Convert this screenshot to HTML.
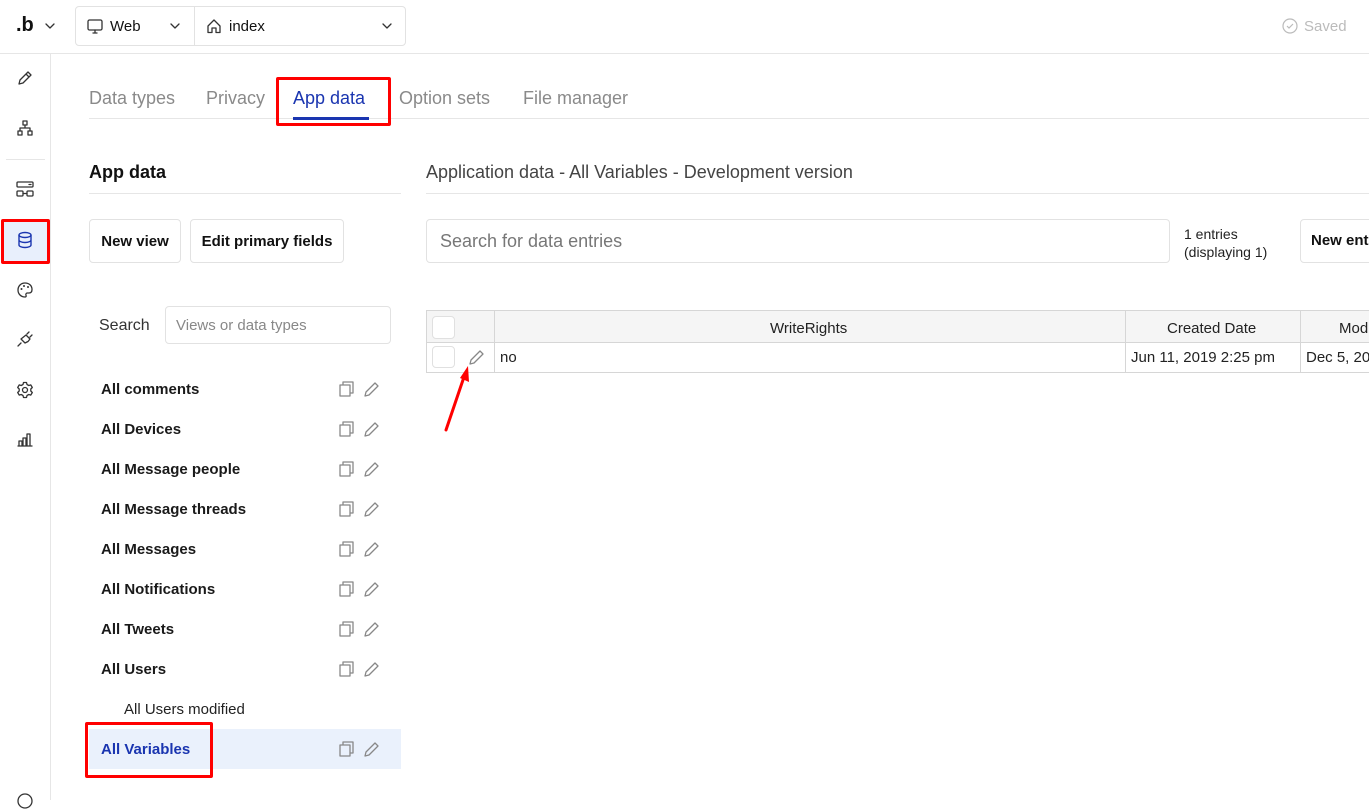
<!DOCTYPE html>
<html><head><meta charset="utf-8"><style>
*{margin:0;padding:0;box-sizing:border-box}
body{width:1369px;height:800px;overflow:hidden;background:#fff;font-family:"Liberation Sans",sans-serif;color:#111;position:relative}
.a{position:absolute}
.t{white-space:nowrap}
svg{display:block}
.ic{fill:none;stroke:#333;stroke-width:1.3;stroke-linecap:round;stroke-linejoin:round}
.gi{fill:none;stroke:#888;stroke-width:1.3;stroke-linejoin:round}
.row{position:absolute;left:89px;width:312px;height:40px}
.row span{position:absolute;left:12px;top:12px;font-size:15px;font-weight:bold;color:#1a1a1a}
.row svg{position:absolute;top:11px}
.btn{position:absolute;border:1px solid #e2e2e2;border-radius:4px;font-size:15px;font-weight:bold;display:flex;align-items:center;justify-content:center}
.red{position:absolute;border:3px solid #f00;border-radius:2px}
</style></head><body>
<div class="a" style="left:0;top:53px;width:1369px;height:1px;background:#e6e6e6"></div>
<div class="a t" style="left:16px;top:14px;font-size:20px;font-weight:bold">.b</div>
<svg class="a" style="left:45px;top:22px" width="10" height="8"><path class="ic" d="M1 2l4 4 4-4"/></svg>
<div class="a" style="left:75px;top:6px;width:331px;height:40px;border:1px solid #e2e2e2;border-radius:4px"></div>
<div class="a" style="left:194px;top:7px;width:1px;height:38px;background:#e2e2e2"></div>
<svg class="a" style="left:87px;top:19px" width="16" height="16"><rect class="ic" x="1" y="1" width="14" height="10" rx="1.5"/><path class="ic" d="M6 14h4M8 11v3"/></svg>
<div class="a t" style="left:110px;top:18px;font-size:15px">Web</div>
<svg class="a" style="left:170px;top:22px" width="10" height="8"><path class="ic" d="M1 2l4 4 4-4"/></svg>
<svg class="a" style="left:206px;top:18px" width="16" height="16"><path class="ic" d="M2 8L8 2l6 6v6.5h-4V10H6v4.5H2z"/></svg>
<div class="a t" style="left:229px;top:18px;font-size:15px">index</div>
<svg class="a" style="left:382px;top:22px" width="10" height="8"><path class="ic" d="M1 2l4 4 4-4"/></svg>
<svg class="a" style="left:1282px;top:18px" width="16" height="16"><circle cx="8" cy="8" r="7" fill="none" stroke="#bbb" stroke-width="1.2"/><path d="M5 8l2 2 4-4" fill="none" stroke="#bbb" stroke-width="1.2"/></svg>
<div class="a t" style="left:1304px;top:18px;font-size:15px;color:#bbb">Saved</div>
<div class="a" style="left:50px;top:54px;width:1px;height:746px;background:#e6e6e6"></div>
<div class="a" style="left:6px;top:159px;width:39px;height:1px;background:#e6e6e6"></div>
<svg class="a" style="left:16px;top:69px" width="18" height="18"><path class="ic" d="M3 15l1-4 8-8 3 3-8 8z M10 5l3 3"/></svg>
<svg class="a" style="left:16px;top:119px" width="18" height="18"><rect class="ic" x="7" y="2" width="4" height="4"/><rect class="ic" x="2" y="12" width="4" height="4"/><rect class="ic" x="12" y="12" width="4" height="4"/><path class="ic" d="M9 6v3M4 12V9h10v3"/></svg>
<svg class="a" style="left:16px;top:180px" width="18" height="18"><rect class="ic" x="1" y="2" width="16" height="5" rx="1"/><rect class="ic" x="1" y="11" width="6" height="5" rx="1"/><rect class="ic" x="11" y="11" width="6" height="5" rx="1"/><path class="ic" d="M7 13.5h4M13 4.5h2"/></svg>
<div class="a" style="left:2px;top:220px;width:47px;height:43px;background:#e8effc"></div>
<div class="red" style="left:1px;top:219px;width:49px;height:45px"></div>
<svg class="a" style="left:16px;top:231px" width="18" height="18"><g fill="none" stroke="#1a35b0" stroke-width="1.4"><ellipse cx="9" cy="4" rx="6" ry="2.5"/><path d="M3 4v10c0 1.4 2.7 2.5 6 2.5s6-1.1 6-2.5V4M3 9c0 1.4 2.7 2.5 6 2.5s6-1.1 6-2.5"/></g></svg>
<svg class="a" style="left:16px;top:281px" width="18" height="18"><path class="ic" d="M9 2C5 2 2 5 2 9s3 7 7 7c1 0 1.5-.8 1-1.7-.6-1 .2-2.3 1.3-2.3H13c2 0 3-1.4 3-3.5C16 4.5 13 2 9 2z"/><circle cx="5.5" cy="8" r="1" fill="#333"/><circle cx="8" cy="5" r="1" fill="#333"/><circle cx="12" cy="6" r="1" fill="#333"/></svg>
<svg class="a" style="left:16px;top:330px" width="18" height="18"><path class="ic" d="M2 16l3-3M5 9l4 4 3-1.5 2-2.5-4-4-2.5 2z M11 4l2-2M14 7l2-2"/></svg>
<svg class="a" style="left:16px;top:381px" width="18" height="18"><circle class="ic" cx="9" cy="9" r="2.5"/><path class="ic" d="M7.5 1.5h3l.5 2 1.8 1 2-.6 1.5 2.6-1.5 1.5v2l1.5 1.5-1.5 2.6-2-.6-1.8 1-.5 2h-3l-.5-2-1.8-1-2 .6-1.5-2.6L3.2 10V8L1.7 6.5l1.5-2.6 2 .6 1.8-1z"/></svg>
<svg class="a" style="left:16px;top:430px" width="18" height="18"><path class="ic" d="M2 16h14M3 16v-5h3v5M7 16V8h3v8M11 16V4h3v12"/></svg>
<svg class="a" style="left:16px;top:792px" width="18" height="18"><circle class="ic" cx="9" cy="9" r="7"/></svg>
<div class="a t" style="left:89px;top:88px;font-size:18px;color:#8a8a8a">Data types</div>
<div class="a t" style="left:206px;top:88px;font-size:18px;color:#8a8a8a">Privacy</div>
<div class="a t" style="left:293px;top:88px;font-size:18px;color:#1a35b0">App data</div>
<div class="a t" style="left:399px;top:88px;font-size:18px;color:#8a8a8a">Option sets</div>
<div class="a t" style="left:523px;top:88px;font-size:18px;color:#8a8a8a">File manager</div>
<div class="a" style="left:89px;top:118px;width:1280px;height:1px;background:#e6e6e6"></div>
<div class="a" style="left:293px;top:117px;width:76px;height:3px;background:#1a35b0"></div>
<div class="red" style="left:276px;top:77px;width:115px;height:49px"></div>
<div class="a t" style="left:89px;top:162px;font-size:18px;font-weight:bold">App data</div>
<div class="a" style="left:89px;top:193px;width:312px;height:1px;background:#e6e6e6"></div>
<div class="btn" style="left:89px;top:219px;width:92px;height:44px">New view</div>
<div class="btn" style="left:190px;top:219px;width:154px;height:44px">Edit primary fields</div>
<div class="a t" style="left:99px;top:317px;font-size:16px;color:#333">Search</div>
<div class="a" style="left:165px;top:306px;width:226px;height:38px;border:1px solid #e2e2e2;border-radius:4px"></div>
<div class="a t" style="left:176px;top:317px;font-size:15px;color:#888">Views or data types</div>
<div class="a" style="left:89px;top:729px;width:312px;height:40px;background:#eaf1fc"></div>
<div class="row" style="top:369px"><span>All comments</span><svg style="left:248px" width="18" height="18"><path class="gi" d="M3 5h10v11H3z M6 5V2h10v11h-3"/></svg><svg style="left:274px" width="18" height="18"><path class="gi" d="M2 16l1-4 9-9 3 3-9 9z"/></svg></div>
<div class="row" style="top:409px"><span>All Devices</span><svg style="left:248px" width="18" height="18"><path class="gi" d="M3 5h10v11H3z M6 5V2h10v11h-3"/></svg><svg style="left:274px" width="18" height="18"><path class="gi" d="M2 16l1-4 9-9 3 3-9 9z"/></svg></div>
<div class="row" style="top:449px"><span>All Message people</span><svg style="left:248px" width="18" height="18"><path class="gi" d="M3 5h10v11H3z M6 5V2h10v11h-3"/></svg><svg style="left:274px" width="18" height="18"><path class="gi" d="M2 16l1-4 9-9 3 3-9 9z"/></svg></div>
<div class="row" style="top:489px"><span>All Message threads</span><svg style="left:248px" width="18" height="18"><path class="gi" d="M3 5h10v11H3z M6 5V2h10v11h-3"/></svg><svg style="left:274px" width="18" height="18"><path class="gi" d="M2 16l1-4 9-9 3 3-9 9z"/></svg></div>
<div class="row" style="top:529px"><span>All Messages</span><svg style="left:248px" width="18" height="18"><path class="gi" d="M3 5h10v11H3z M6 5V2h10v11h-3"/></svg><svg style="left:274px" width="18" height="18"><path class="gi" d="M2 16l1-4 9-9 3 3-9 9z"/></svg></div>
<div class="row" style="top:569px"><span>All Notifications</span><svg style="left:248px" width="18" height="18"><path class="gi" d="M3 5h10v11H3z M6 5V2h10v11h-3"/></svg><svg style="left:274px" width="18" height="18"><path class="gi" d="M2 16l1-4 9-9 3 3-9 9z"/></svg></div>
<div class="row" style="top:609px"><span>All Tweets</span><svg style="left:248px" width="18" height="18"><path class="gi" d="M3 5h10v11H3z M6 5V2h10v11h-3"/></svg><svg style="left:274px" width="18" height="18"><path class="gi" d="M2 16l1-4 9-9 3 3-9 9z"/></svg></div>
<div class="row" style="top:649px"><span>All Users</span><svg style="left:248px" width="18" height="18"><path class="gi" d="M3 5h10v11H3z M6 5V2h10v11h-3"/></svg><svg style="left:274px" width="18" height="18"><path class="gi" d="M2 16l1-4 9-9 3 3-9 9z"/></svg></div>
<div class="a t" style="left:124px;top:701px;font-size:15px;color:#222">All Users modified</div>
<div class="row" style="top:729px"><span style="color:#1a35b0">All Variables</span><svg style="left:248px" width="18" height="18"><path class="gi" d="M3 5h10v11H3z M6 5V2h10v11h-3"/></svg><svg style="left:274px" width="18" height="18"><path class="gi" d="M2 16l1-4 9-9 3 3-9 9z"/></svg></div>
<div class="red" style="left:85px;top:722px;width:128px;height:56px"></div>
<div class="a t" style="left:426px;top:162px;font-size:18px;color:#444">Application data - All Variables - Development version</div>
<div class="a" style="left:426px;top:193px;width:943px;height:1px;background:#e6e6e6"></div>
<div class="a" style="left:426px;top:219px;width:744px;height:44px;border:1px solid #e2e2e2;border-radius:4px"></div>
<div class="a t" style="left:440px;top:231px;font-size:18px;color:#777">Search for data entries</div>
<div class="a t" style="left:1184px;top:225px;font-size:14px;line-height:18px;color:#222">1 entries<br>(displaying 1)</div>
<div class="a" style="left:1300px;top:219px;width:80px;height:44px;border:1px solid #e2e2e2;border-radius:4px"></div>
<div class="a t" style="left:1311px;top:232px;font-size:15px;font-weight:bold">New ent</div>
<div class="a" style="left:426px;top:310px;width:950px;height:63px;border:1px solid #d6d6d6"></div>
<div class="a" style="left:427px;top:311px;width:950px;height:31px;background:#f5f5f5"></div>
<div class="a" style="left:427px;top:342px;width:950px;height:1px;background:#d6d6d6"></div>
<div class="a" style="left:494px;top:311px;width:1px;height:61px;background:#d6d6d6"></div>
<div class="a" style="left:1125px;top:311px;width:1px;height:61px;background:#d6d6d6"></div>
<div class="a" style="left:1300px;top:311px;width:1px;height:61px;background:#d6d6d6"></div>
<div class="a" style="left:432px;top:316px;width:23px;height:23px;border:1px solid #e0e0e0;border-radius:4px;background:#fff"></div>
<div class="a" style="left:432px;top:346px;width:23px;height:22px;border:1px solid #e0e0e0;border-radius:4px;background:#fff"></div>
<svg class="a" style="left:468px;top:348px" width="18" height="18"><path class="gi" d="M2 16l1-4 9-9 3 3-9 9z"/></svg>
<div class="a t" style="left:770px;top:320px;font-size:15px;color:#222">WriteRights</div>
<div class="a t" style="left:1167px;top:320px;font-size:15px;color:#222">Created Date</div>
<div class="a t" style="left:1339px;top:320px;font-size:15px;color:#222">Mod</div>
<div class="a t" style="left:500px;top:349px;font-size:15px;color:#222">no</div>
<div class="a t" style="left:1131px;top:349px;font-size:15px;color:#222">Jun 11, 2019 2:25 pm</div>
<div class="a t" style="left:1306px;top:349px;font-size:15px;color:#222">Dec 5, 20</div>
<svg class="a" style="left:440px;top:362px" width="40" height="72"><path d="M6 68L25 12" stroke="#f00" stroke-width="3" fill="none" stroke-linecap="round"/><path d="M28 4l1 16-9-4z" fill="#f00"/></svg>
</body></html>
